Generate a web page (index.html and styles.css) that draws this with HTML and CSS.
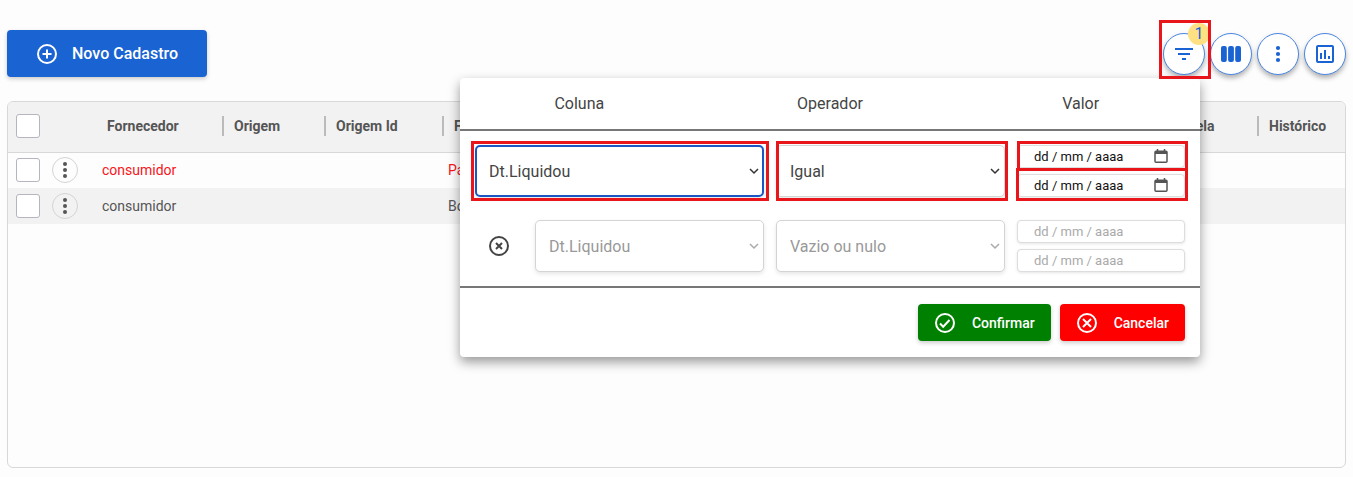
FILE: index.html
```
<!DOCTYPE html>
<html lang="pt-BR">
<head>
<meta charset="utf-8">
<meta name="viewport" content="width=device-width, initial-scale=1">
<title>Cadastros</title>
<link rel="stylesheet" href="styles.css">
</head>
<body>

<header class="toolbar">
  <button class="btn btn-new" type="button">
    <svg width="22" height="22" viewBox="0 0 22 22"><circle cx="11" cy="11" r="9" /><path d="M11 6.5v9M6.5 11h9" /></svg>
    Novo Cadastro
  </button>

  <div class="tools">
    <div class="tool">
      <button class="round" type="button" aria-label="Filtros">
        <svg width="20" height="20" viewBox="0 0 20 20"><path d="M1 5h18M4 10h12M8 15h4" /></svg>
      </button>
      <span class="badge">1</span>
      <span class="mark mark-tool"></span>
    </div>
    <button class="round" type="button" aria-label="Colunas">
      <svg class="solid" width="22" height="18" viewBox="0 0 22 18"><rect x="1" y="1" width="5.8" height="16" rx="2" /><rect x="8.1" y="1" width="5.8" height="16" rx="2" /><rect x="15.2" y="1" width="5.8" height="16" rx="2" /></svg>
    </button>
    <button class="round" type="button" aria-label="Mais">
      <svg class="solid" width="6" height="18" viewBox="0 0 6 18"><circle cx="3" cy="3" r="2.1" /><circle cx="3" cy="9" r="2.1" /><circle cx="3" cy="15" r="2.1" /></svg>
    </button>
    <button class="round" type="button" aria-label="Gráficos">
      <svg width="20" height="20" viewBox="0 0 20 20"><rect x="2" y="2" width="16" height="16" rx="1" /><path d="M6 9v6M10 6v9M14 12v3" /></svg>
    </button>
  </div>

  <form class="popup">
    <div class="popup-head">
      <span>Coluna</span>
      <span>Operador</span>
      <span>Valor</span>
    </div>

    <div class="popup-body">
      <div class="filter">
        <div class="field">
          <select class="active" aria-label="Coluna"><option>Dt.Liquidou</option></select>
          <svg class="chevron" width="10" height="8" viewBox="0 0 10 8"><path d="M1 2l4 4 4-4" /></svg>
          <span class="mark mark-column"></span>
        </div>
        <div class="field">
          <select aria-label="Operador"><option>Igual</option></select>
          <svg class="chevron" width="10" height="8" viewBox="0 0 10 8"><path d="M1 2l4 4 4-4" /></svg>
          <span class="mark mark-operator"></span>
        </div>
        <div class="dates">
          <div class="field">
            <input type="text" placeholder="dd / mm / aaaa" aria-label="Data inicial">
            <svg class="calendar" width="14" height="14" viewBox="0 0 14 14"><rect x="1" y="2.2" width="12" height="11" rx="1" /><path class="bar" d="M1 2h12v3H1z" /><path d="M3.5 0v3M10.5 0v3" /></svg>
            <span class="mark mark-start"></span>
          </div>
          <div class="field">
            <input type="text" placeholder="dd / mm / aaaa" aria-label="Data final">
            <svg class="calendar" width="14" height="14" viewBox="0 0 14 14"><rect x="1" y="2.2" width="12" height="11" rx="1" /><path class="bar" d="M1 2h12v3H1z" /><path d="M3.5 0v3M10.5 0v3" /></svg>
            <span class="mark mark-end"></span>
          </div>
        </div>
      </div>

      <div class="filter">
        <div class="saved">
          <button class="remove" type="button" aria-label="Remover filtro">
            <svg width="22" height="22" viewBox="0 0 22 22"><circle cx="11" cy="11" r="9" /><path d="M8 8l6 6M14 8l-6 6" /></svg>
          </button>
          <div class="field">
            <select disabled aria-label="Coluna"><option>Dt.Liquidou</option></select>
            <svg class="chevron" width="10" height="8" viewBox="0 0 10 8"><path d="M1 2l4 4 4-4" /></svg>
          </div>
        </div>
        <div class="field">
          <select disabled aria-label="Operador"><option>Vazio ou nulo</option></select>
          <svg class="chevron" width="10" height="8" viewBox="0 0 10 8"><path d="M1 2l4 4 4-4" /></svg>
        </div>
        <div class="dates">
          <div class="field"><input type="text" placeholder="dd / mm / aaaa" aria-label="Data inicial" disabled></div>
          <div class="field"><input type="text" placeholder="dd / mm / aaaa" aria-label="Data final" disabled></div>
        </div>
      </div>
    </div>

    <div class="popup-foot">
      <button class="btn btn-ok" type="button">
        <svg width="22" height="22" viewBox="0 0 22 22"><circle cx="11" cy="11" r="9" /><path d="M6 11.5l3.2 3.2 6.3-6.7" /></svg>
        Confirmar
      </button>
      <button class="btn btn-cancel" type="button">
        <svg width="22" height="22" viewBox="0 0 22 22"><circle cx="11" cy="11" r="9" /><path d="M7 7l8 8M15 7l-8 8" /></svg>
        Cancelar
      </button>
    </div>
  </form>
</header>

<main class="grid">
  <table>
    <colgroup>
      <col class="c-check"><col class="c-menu"><col class="c-supplier"><col class="c-origin"><col class="c-origin-id"><col><col class="c-part"><col class="c-history">
    </colgroup>
    <thead>
      <tr>
        <th><input type="checkbox" aria-label="Selecionar todos"></th>
        <th></th>
        <th>Fornecedor</th>
        <th class="sep">Origem</th>
        <th class="sep">Origem Id</th>
        <th class="sep">Forma</th>
        <th class="sep">Parcela</th>
        <th class="sep">Histórico</th>
      </tr>
    </thead>
    <tbody>
      <tr class="late">
        <td><input type="checkbox" aria-label="Selecionar linha"></td>
        <td><button class="row-menu" type="button" aria-label="Ações"><svg width="6" height="18" viewBox="0 0 6 18"><circle cx="3" cy="3" r="2" /><circle cx="3" cy="9" r="2" /><circle cx="3" cy="15" r="2" /></svg></button></td>
        <td>consumidor</td>
        <td></td>
        <td></td>
        <td>Pago</td>
        <td></td>
        <td></td>
      </tr>
      <tr>
        <td><input type="checkbox" aria-label="Selecionar linha"></td>
        <td><button class="row-menu" type="button" aria-label="Ações"><svg width="6" height="18" viewBox="0 0 6 18"><circle cx="3" cy="3" r="2" /><circle cx="3" cy="9" r="2" /><circle cx="3" cy="15" r="2" /></svg></button></td>
        <td>consumidor</td>
        <td></td>
        <td></td>
        <td>Boleto</td>
        <td></td>
        <td></td>
      </tr>
    </tbody>
  </table>
</main>

</body>
</html>
```

FILE: styles.css
```
* {
  box-sizing: border-box;
}

body {
  display: flex;
  flex-direction: column;
  gap: 24px;
  min-height: 100vh;
  margin: 0;
  padding: 30px 7px 9px;
  background: #fdfdfd;
  color: #555;
  font-family: Roboto, sans-serif;
  font-size: 14px;
}

button, select, input {
  margin: 0;
  font-family: inherit;
}

svg {
  display: block;
  flex: none;
  fill: none;
  stroke: currentColor;
  stroke-width: 2;
}

/* toolbar */

.toolbar {
  position: relative;
  display: flex;
  justify-content: space-between;
  align-items: center;
}

.btn {
  display: flex;
  align-items: center;
  border: 0;
  border-radius: 4px;
  color: #fff;
  font-weight: 500;
  box-shadow: 0 2px 4px rgba(0, 0, 0, .2);
}

.btn-new {
  gap: 14px;
  height: 47px;
  padding: 0 29px;
  background: #1a63d3;
  font-size: 16px;
}

.tools {
  display: flex;
  gap: 5px;
}

.tool {
  position: relative;
}

.round {
  display: flex;
  align-items: center;
  justify-content: center;
  width: 42px;
  height: 42px;
  padding: 0;
  border: 1px solid #4a86e0;
  border-radius: 50%;
  background: #fff;
  color: #1a63d3;
  box-shadow: 0 3px 5px rgba(0, 0, 0, .3);
}

.solid {
  fill: currentColor;
  stroke: none;
}

.badge {
  position: absolute;
  top: -10px;
  right: -5px;
  width: 22px;
  height: 22px;
  border-radius: 50%;
  background: #ffe082;
  color: #1a63d3;
  font-size: 16px;
  line-height: 22px;
  text-align: center;
}

.mark {
  position: absolute;
  z-index: 3;
  border: 3px solid #e8161b;
  pointer-events: none;
}

.mark-tool {
  inset: -13px -6px -4px -4px;
}

.mark-column {
  inset: -4px -5px -4px -4px;
}

.mark-operator {
  inset: -4px -3px -4px 0;
}

.mark-start {
  inset: -4px -3px -3px 0;
}

.mark-end {
  inset: -6px -3px -4px -1px;
}

/* filter popup */

.popup {
  position: absolute;
  z-index: 2;
  top: 48px;
  right: 146px;
  width: 740px;
  border-radius: 4px;
  background: #fff;
  box-shadow: 0 5px 12px rgba(0, 0, 0, .4);
}

.popup-head {
  display: grid;
  grid-template-columns: repeat(3, 1fr);
  gap: 12px;
  border-bottom: 2px solid #777;
  color: #444;
  font-size: 16px;
  line-height: 51px;
  text-align: center;
}

.popup-body {
  display: flex;
  flex-direction: column;
  gap: 23px;
  padding: 14px 15px;
  border-bottom: 2px solid #777;
}

.filter {
  display: grid;
  grid-template-columns: 1fr 229px 168px;
  gap: 12px;
}

.field {
  position: relative;
}

.field select {
  display: block;
  width: 100%;
  height: 52px;
  padding: 0 13px;
  border: 1px solid #d4d4d4;
  border-radius: 5px;
  background: #fff;
  color: #444;
  font-size: 16px;
  appearance: none;
  box-shadow: 0 2px 4px rgba(0, 0, 0, .1);
}

.field select.active {
  border: 2px solid #1a56c4;
  padding: 0 12px;
}

.field select:disabled {
  color: #999;
  opacity: 1;
}

.chevron {
  position: absolute;
  top: 22px;
  right: 5px;
  color: #333;
  stroke-width: 1.5;
  pointer-events: none;
}

select:disabled + .chevron {
  color: #aaa;
}

.saved {
  display: flex;
  align-items: center;
  justify-content: space-between;
  padding-left: 13px;
}

.saved .field {
  width: 229px;
}

.remove {
  padding: 0;
  border: 0;
  background: none;
  color: #444;
}

.dates {
  display: flex;
  flex-direction: column;
  gap: 6px;
}

.dates input {
  display: block;
  width: 100%;
  height: 23px;
  padding: 0 16px;
  border: 1px solid #ddd;
  border-radius: 4px;
  background: #fff;
  font-size: 13px;
  box-shadow: 0 1px 3px rgba(0, 0, 0, .1);
}

.dates input::placeholder {
  color: #111;
}

.dates input:disabled::placeholder {
  color: #aaa;
}

.calendar {
  position: absolute;
  top: 4px;
  right: 17px;
  color: #555;
  stroke-width: 1.5;
}

.bar {
  fill: currentColor;
  stroke: none;
}

.popup-foot {
  display: flex;
  justify-content: flex-end;
  gap: 9px;
  padding: 16px 15px;
}

.popup-foot .btn {
  gap: 16px;
  height: 37px;
  padding: 0 16px;
  font-size: 14px;
}

.btn-ok {
  background: #008000;
}

.btn-cancel {
  background: #f00;
}

/* table */

.grid {
  flex: 1;
  overflow: hidden;
  border: 1px solid #d8d8d8;
  border-radius: 6px;
}

table {
  width: 100%;
  border-collapse: collapse;
  table-layout: fixed;
}

.c-check {
  width: 36px;
}

.c-menu {
  width: 53px;
}

.c-supplier {
  width: 125px;
}

.c-origin {
  width: 102px;
}

.c-origin-id {
  width: 118px;
}

.c-part {
  width: 102px;
}

.c-history {
  width: 88px;
}

th, td {
  padding: 0 0 0 6px;
  text-align: left;
  white-space: nowrap;
}

th {
  height: 50px;
  padding: 0 0 2px 10px;
  background: #f2f2f2;
  font-weight: 700;
}

th:first-child, td:first-child {
  padding-left: 8px;
}

thead tr {
  border-bottom: 1px solid #d8d8d8;
}

.sep {
  padding-left: 12px;
  background: linear-gradient(#bbb, #bbb) left 14px / 2px 20px no-repeat #f2f2f2;
}

td {
  height: 36px;
}

td:nth-child(2) {
  padding-left: 8px;
}

td:nth-child(3) {
  padding-left: 5px;
}

tbody tr:nth-child(even) {
  background: #f2f2f2;
}

.late {
  color: #f81420;
}

input[type="checkbox"] {
  display: block;
  width: 24px;
  height: 24px;
  border: 1px solid #b5b5c0;
  border-radius: 3px;
  background: #fff;
  appearance: none;
}

.row-menu {
  display: flex;
  align-items: center;
  justify-content: center;
  width: 26px;
  height: 26px;
  padding: 0;
  border: 1px solid #d4d4d4;
  border-radius: 50%;
  background: none;
  color: #555;
}

.row-menu svg {
  fill: currentColor;
  stroke: none;
}
```
